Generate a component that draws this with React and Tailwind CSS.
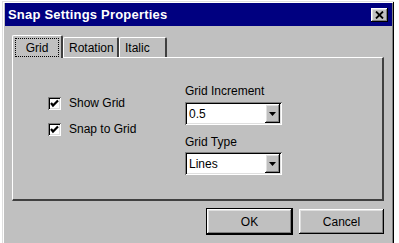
import React from 'react';

const raised = 'shadow-[inset_-1px_-1px_0_#000,inset_1px_1px_0_#fff,inset_-2px_-2px_0_#808080,inset_2px_2px_0_#dfdfdf]';
const sunken = 'shadow-[inset_1px_1px_0_#808080,inset_-1px_-1px_0_#fff,inset_2px_2px_0_#000,inset_-2px_-2px_0_#dfdfdf]';

const Checkbox = ({ label }) => (
    <div className="flex items-center gap-[8px] h-[14px]">
        <div className={`w-[13px] h-[13px] bg-white flex items-center justify-center ${sunken}`}>
            <svg width="9" height="9" viewBox="0 0 9 9">
                <path d="M1 4 L3 6.5 L8 1.5" stroke="#000" strokeWidth="2.2" fill="none" />
            </svg>
        </div>
        <span>{label}</span>
    </div>
);

const Combo = ({ value }) => (
    <div className={`w-[97px] h-[23px] bg-white flex items-center justify-between pl-[4px] pr-[2px] ${sunken}`}>
        <span>{value}</span>
        <div className={`w-[15px] h-[19px] bg-[#c0c0c0] flex items-center justify-center ${raised}`}>
            <svg width="7" height="4" viewBox="0 0 7 4">
                <path d="M0 0 H7 L3.5 4 Z" fill="#000" />
            </svg>
        </div>
    </div>
);

const Tab = ({ label, active, width }) =>
    active ? (
        <div className="relative z-10 -mb-px w-[51px] h-[23px] bg-[#c0c0c0] border-t border-l border-white border-r-2 border-r-[#404040] rounded-t-[2px] flex items-center justify-center px-[2px] pt-[2px] pb-[1px]">
            <div className="w-full h-full border border-dotted border-black flex items-center justify-center">{label}</div>
        </div>
    ) : (
        <div className={`${width} h-[20px] bg-[#c0c0c0] border-t border-l border-white border-r-2 border-r-[#404040] rounded-t-[2px] flex items-center pl-[5px]`}>
            {label}
        </div>
    );

const App = () => {
    return (
        <div className="w-[399px] h-[243px] overflow-hidden bg-white pl-[2px] pt-[1px] font-['Liberation_Sans',sans-serif] text-[12px] text-black">
            <div className="w-[392px] h-[250px] bg-[#c0c0c0] pt-[2px] pl-[3px] pr-[2px] shadow-[inset_1px_1px_0_#dfdfdf,inset_-1px_0_0_#000,inset_2px_2px_0_#fff,inset_-2px_0_0_#808080]">
                {/* Title bar */}
                <div className="h-[23px] bg-[#000080] flex items-center justify-between pl-[3px] pr-[4px]">
                    <span className="text-white font-bold text-[13px] tracking-[0.2px]">Snap Settings Properties</span>
                    <button className={`w-[17px] h-[14px] bg-[#c0c0c0] flex items-center justify-center ${raised}`}>
                        <svg width="9" height="8" viewBox="0 0 9 8">
                            <path d="M1 0.5 L8 7.5 M8 0.5 L1 7.5" stroke="#000" strokeWidth="1.8" />
                        </svg>
                    </button>
                </div>

                <div className="pl-[7px] pr-[8px] pt-[9px]">
                    {/* Tabs */}
                    <div className="flex items-end">
                        <Tab label="Grid" active />
                        <Tab label="Rotation" width="w-[56px]" />
                        <Tab label="Italic" width="w-[48px]" />
                    </div>

                    {/* Panel */}
                    <div className="w-[372px] h-[144px] border-t border-l border-white border-r-2 border-b-2 border-r-[#404040] border-b-[#404040] flex pt-[26px] pl-[35px]">
                        <div className="flex flex-col gap-[12px] mt-[12px] w-[137px]">
                            <Checkbox label="Show Grid" />
                            <Checkbox label="Snap to Grid" />
                        </div>
                        <div className="flex flex-col">
                            <span className="leading-[15px]">Grid Increment</span>
                            <div className="mt-[3px]">
                                <Combo value="0.5" />
                            </div>
                            <span className="leading-[15px] mt-[10px]">Grid Type</span>
                            <div className="mt-[2px]">
                                <Combo value="Lines" />
                            </div>
                        </div>
                    </div>

                    {/* Buttons */}
                    <div className="flex justify-end gap-[7px] mt-[8px] w-[372px]">
                        <button className={`w-[85px] h-[25px] bg-[#c0c0c0] outline outline-1 outline-black ${raised}`}>OK</button>
                        <button className={`w-[85px] h-[25px] bg-[#c0c0c0] ${raised}`}>Cancel</button>
                    </div>
                </div>
            </div>
        </div>
    );
};

export default App;
